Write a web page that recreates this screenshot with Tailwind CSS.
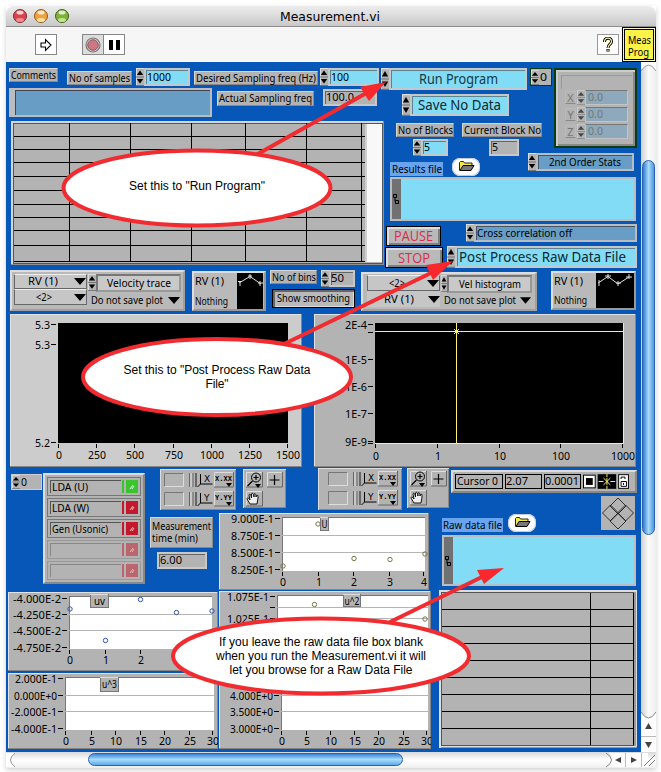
<!DOCTYPE html>
<html lang="en">
<head>
<meta charset="utf-8">
<title>Measurement.vi</title>
<script src="https://cdn.jsdelivr.net/npm/@tailwindcss/browser@4"></script>
</head>
<body class="bg-white w-[661px] h-[772px] overflow-hidden text-black font-['Noto_Sans','DejaVu_Sans',sans-serif] text-[11px] leading-none">

<svg class="hidden">
  <symbol id="st" viewBox="0 0 8 18" preserveAspectRatio="none"><rect width="8" height="18" fill="#b3b3b3"/><path d="M0 .5H8M.5 0V18" stroke="#ddd"/><path d="M0 17.5H8M0 9H8" stroke="#777"/><path d="M4 2.5 7.2 7H.8ZM4 15.5 7.2 11H.8Z"/></symbol>
  <symbol id="dn" viewBox="0 0 12 7"><path d="M0 0H12L6 7Z"/></symbol>
  <symbol id="folder" viewBox="0 0 28 18"><rect width="28" height="18" rx="8" fill="#fff"/><rect x=".5" y=".5" width="27" height="17" rx="8" fill="none" stroke="#bfc8d4"/><path d="M7.500 12.500V4.500l1-1h3l1 1.500h7.500v3" fill="#f3e94a" stroke="#222"/><path d="M8 12.500l3-5H22l-3 5Z" fill="#777" stroke="#000"/></symbol>
  <symbol id="path" viewBox="0 0 8 12"><path d="M1.500 1.500h3v3h-3zM3.500 7.500h3v3h-3zM3 5v3.500" fill="none" stroke="#000"/></symbol>
  <symbol id="fmt" viewBox="0 0 76 41">
    <path d="M4.500 17.500V4.500h19M4.500 36.500V23.500h19" fill="none" stroke="#777"/><path d="M23.500 4.500v13h-19M23.500 23.500v13h-19" fill="none" stroke="#ddd"/>
    <path d="M29.500 4v14M29.500 23v14M33 4v14M33 23v14" stroke="#666"/><path d="M31 4v14M31 23v14" stroke="#ddd"/><path d="M36 4v14M36 23v14" stroke="#666" stroke-width="2"/>
    <path d="M40.500 5v10h12M40.500 15l-3 3M40.500 24v10h12M40.500 34l-3 3" fill="none" stroke="#000"/>
    <path d="M54.500 18V3.500H73M54.500 37V22.500H73" fill="none" stroke="#ddd"/><path d="M73.500 3v15H54M73.500 22v15H54" fill="none" stroke="#666"/>
    <path d="M66 14h6l-3 4ZM66 33h6l-3 4Z"/>
    <g font-family="DejaVu Sans" font-size="9"><text x="44" y="13">X</text><text x="44" y="32">Y</text></g>
    <g font-family="DejaVu Sans Mono" font-size="7" font-weight="bold"><text x="55" y="12" textLength="17">X.XX</text><text x="55" y="31" textLength="17">Y.YY</text></g>
  </symbol>
  <symbol id="tools" viewBox="0 0 43 40">
    <path d="M3.500 18V3.500H19M24.500 18V3.500H39M3.500 37V22.500H19" fill="none" stroke="#ddd"/><path d="M19.500 3v15H3M39.500 3v15H24M19.500 22v15H3" fill="none" stroke="#666"/>
    <circle cx="13" cy="8.500" r="4.500" fill="none" stroke="#000"/><path d="M13 6v5M10.500 8.500h5M9.500 12l-5 5M31.500 6v10M26.500 11h10" stroke="#000" stroke-width="1.200"/><path d="M12 15h6l-3 4Z"/>
    <path d="M7 35l-3-5c0-2 2-1 3 1l-1-5c1-2 2 0 2.500 3V25c1-2 2 0 2.500 3V25c1-1 2 0 2 3l1-2c1 0 1 1 1 3l-1 6Z" fill="#eee" stroke="#000" stroke-width=".9"/>
  </symbol>
</svg>

<div class="relative w-[661px] h-[772px] pl-[6px] pt-[6px]">
 <div class="w-[650px] flex flex-col shadow-[0_2px_5px_#00000030]">

  <header class="h-[21px] rounded-t-lg bg-linear-to-b from-[#ededed] to-[#c9c9c9] border-b border-[#8d8d8d] flex items-center relative">
    <div class="flex gap-[7px] ml-[7px]">
      <svg class="size-[14px]" viewBox="0 0 14 14"><circle cx="7" cy="7" r="6.500" fill="#d9454e" stroke="#7c2a2e"/><ellipse cx="7" cy="3.500" rx="3.500" ry="2" fill="#fff" opacity=".75"/><ellipse cx="7" cy="11" rx="4" ry="2" fill="#fbb" opacity=".6"/></svg>
      <svg class="size-[14px]" viewBox="0 0 14 14"><circle cx="7" cy="7" r="6.500" fill="#f0a13b" stroke="#8d5a22"/><ellipse cx="7" cy="3.500" rx="3.500" ry="2" fill="#fff" opacity=".75"/><ellipse cx="7" cy="11" rx="4" ry="2" fill="#ffc" opacity=".7"/></svg>
      <svg class="size-[14px]" viewBox="0 0 14 14"><circle cx="7" cy="7" r="6.500" fill="#7fb13b" stroke="#41601f"/><ellipse cx="7" cy="3.500" rx="3.500" ry="2" fill="#fff" opacity=".75"/><ellipse cx="7" cy="11" rx="4" ry="2" fill="#dfa" opacity=".7"/></svg>
    </div>
    <h1 class="ml-[211px] text-[13px] font-['DejaVu_Sans']" data-w="100">Measurement.vi</h1>
  </header>

  <nav class="h-[35px] bg-[#f6f6f6] flex items-start">
    <div class="ml-[29px] mt-[7px] w-[22px] h-[21px] border border-[#888] bg-white flex items-center justify-center"><svg class="w-3 h-[14px]" viewBox="0 0 12 14"><path d="M1 5h4.500V1.500L11 7 5.500 12.500V9H1Z" fill="#fff" stroke="#000" stroke-width="1.100"/></svg></div>
    <div class="ml-[25px] mt-[7px] w-[22px] h-[21px] border border-[#888] bg-[#ddd] flex items-center justify-center"><svg class="size-4" viewBox="0 0 16 16"><circle cx="8" cy="8" r="7" fill="#ddd" stroke="#777" stroke-width="1.200"/><circle cx="8" cy="8" r="5.300" fill="#cf7780" stroke="#8c5a60"/></svg></div>
    <div class="mt-[7px] w-[21px] h-[21px] border border-l-0 border-[#888] bg-white flex items-center justify-center gap-[3px]"><i class="w-1 h-[10px] bg-black"></i><i class="w-1 h-[10px] bg-black"></i></div>
    <div class="ml-[472px] mt-[7px] w-[22px] h-[21px] border border-[#999] bg-white flex items-center justify-center"><svg class="w-3 h-4" viewBox="0 0 12 16"><path d="M2.500 5C2.500 0 9.500 0 9.500 4.500 9.500 7.500 6 7 6 11M6 12v2.500" fill="none" stroke="#000" stroke-width="3"/><path d="M2.500 5C2.500 0 9.500 0 9.500 4.500 9.500 7.500 6 7 6 11M6 12.500v1.500" fill="none" stroke="#fbf6a0" stroke-width="1.200"/></svg></div>
    <div class="ml-[3px] w-[34px] h-[35px] border border-black bg-[#f4f4d8] p-px"><div class="w-full h-full border border-black bg-[#fdf247] pt-[4px] pl-[3px] text-[10.500px] leading-[12px]"><div data-w="23">Meas</div><div data-w="21">Prog</div></div></div>
  </nav>

  <div class="flex">
  <main class="w-[635px] h-[690px] bg-[#0657b8] flex flex-col">

   <!-- acquisition settings -->
   <section class="flex h-[206px]">
    <div class="w-[375px] shrink-0">
      <div class="flex items-start h-[26px]">
        <div class="ml-[3px] mt-[6px] w-[49px] h-[14px] bg-[#b3b3b3] border border-t-[#d5d5d5] border-l-[#d5d5d5] border-[#888] flex items-center justify-center"><span data-w="45">Comments</span></div>
        <div class="ml-[9px] mt-[9px] w-[65px] h-[14px] bg-[#b3b3b3] border border-t-[#d5d5d5] border-l-[#d5d5d5] border-[#888] flex items-center justify-center"><span data-w="61">No of samples</span></div>
        <svg class="ml-[4px] mt-[6px] w-2 h-[18px]"><use href="#st"/></svg>
        <div class="mt-[6px] w-[46px] h-[18px] bg-[#83dcf5] border-2 border-[#c3c8ca] shadow-[inset_1px_1px_#5d8390] pl-px flex items-center"><span data-w="24">1000</span></div>
        <div class="ml-[4px] mt-[9px] w-[124px] h-[14px] bg-[#b3b3b3] border border-t-[#d5d5d5] border-l-[#d5d5d5] border-[#888] flex items-center justify-center"><span data-w="120">Desired Sampling freq (Hz)</span></div>
        <svg class="ml-[2px] mt-[6px] w-2 h-[18px]"><use href="#st"/></svg>
        <div class="mt-[6px] w-[51px] h-[18px] bg-[#83dcf5] border-2 border-[#c3c8ca] shadow-[inset_1px_1px_#5d8390] pl-px flex items-center"><span data-w="18">100</span></div>
      </div>
      <div class="flex items-start h-[33px]">
        <div class="ml-[3px] w-[203px] h-[29px] bg-[#689dc6] border-2 border-l-[6px] border-[#b9bcc0] shadow-[inset_1px_1px_#445]"></div>
        <div class="ml-[5px] mt-[3px] w-[97px] h-[15px] bg-[#b3b3b3] border border-t-[#d5d5d5] border-l-[#d5d5d5] border-[#888] flex items-center justify-center"><span data-w="93">Actual Sampling freq</span></div>
        <div class="ml-[9px] mt-px w-[54px] h-[17px] bg-[#b3b3b3] border-2 border-[#c8c8c8] shadow-[inset_1px_1px_#666] pl-px flex items-center"><span data-w="28">100.0</span></div>
      </div>
      <svg class="ml-[5px] w-[373px] h-[144px]" viewBox="11 121 373 144">
        <rect x="11" y="121" width="373" height="144" fill="#8e9091"/><path d="M11 122H383M12 121V264" stroke="#d6d6d6" stroke-width="2"/><rect x="13.500" y="123.500" width="369" height="140" fill="#b3b3b3" stroke="#555"/>
        <path d="M69.500 123V262M130.500 123V262M191.500 123V262M245.500 123V262M306.500 123V262M361.500 123V262M14 136.500H365M14 149.500H365M14 162.500H365M14 176.500H365M14 190.500H365M14 204.500H365M14 217.500H365M14 230.500H365M14 245.500H365M14 261.500H365" stroke="#000"/>
        <rect x="365" y="124" width="17" height="138" fill="#f8f8f8"/><path d="M366 124V262" stroke="#d0d0d0" stroke-width="2"/>
      </svg>
    </div>

    <div class="w-[260px] shrink-0">
      <div class="flex items-start h-[91px]">
        <div class="w-[173px] shrink-0">
          <div class="flex items-start h-[32px] pt-[6px]">
            <svg class="w-2 h-[22px] shrink-0"><use href="#st"/></svg>
            <div class="w-[138px] h-[22px] bg-[#83dcf5] border-2 border-[#c3c8ca] shadow-[inset_1px_1px_#5d8390] flex items-center justify-center text-[14px] text-[#123a46]"><span data-w="79">Run Program</span></div>
            <div class="ml-[3px] w-[22px] h-[18px] border border-[#0a3c14] bg-[#b3b3b3] flex items-center"><svg class="w-2 h-[15px]"><use href="#st"/></svg><span class="ml-px" data-w="7">0</span></div>
          </div>
          <div class="flex h-[27px]">
            <svg class="ml-[21px] w-2 h-[22px] shrink-0"><use href="#st"/></svg>
            <div class="w-[99px] h-[22px] bg-[#83dcf5] border-2 border-[#c3c8ca] shadow-[inset_1px_1px_#5d8390] flex items-center justify-center text-[14px] text-[#0c2830]"><span data-w="83">Save No Data</span></div>
          </div>
          <div class="flex pt-[2px] h-[18px]">
            <div class="ml-[15px] w-[58px] h-[14px] bg-[#b3b3b3] border border-t-[#d5d5d5] border-l-[#d5d5d5] border-[#888] flex items-center justify-center"><span data-w="55">No of Blocks</span></div>
            <div class="ml-[8px] w-[80px] h-[14px] bg-[#b3b3b3] border border-t-[#d5d5d5] border-l-[#d5d5d5] border-[#888] flex items-center justify-center"><span data-w="77">Current Block No</span></div>
          </div>
          <div class="flex">
            <svg class="ml-[32px] w-2 h-[17px]"><use href="#st"/></svg>
            <div class="w-[27px] h-[17px] bg-[#83dcf5] border-2 border-[#c3c8ca] shadow-[inset_1px_1px_#5d8390] pl-px flex items-center"><span data-w="6">5</span></div>
            <div class="ml-[41px] w-[30px] h-[17px] bg-[#b3b3b3] border-2 border-[#c8c8c8] shadow-[inset_1px_1px_#666] pl-px flex items-center"><span data-w="6">5</span></div>
          </div>
        </div>
        <div class="mt-[6px] w-[83px] h-[80px] border-2 border-[#0a3c14] bg-[#b3b3b3] p-[3px] shadow-[inset_2px_2px_#ccc,inset_-2px_-2px_#8a8a8a]">
          <div class="mt-[2px] ml-[2px] h-[14px] border-l border-t border-[#999]"></div>
          <div class="flex flex-col gap-[2px] ml-[6px] text-[#777] mt-[1px]">
            <div class="flex items-center h-[15px]"><span class="w-[11px] border border-[#bbb] border-b-[#888] text-center">X</span><svg class="ml-px w-2 h-[15px] opacity-60"><use href="#st"/></svg><div class="w-[43px] h-[15px] border border-[#c3c3c3] border-t-[#777] bg-[#8da9bb] pl-[2px] flex items-center"><span data-w="15">0.0</span></div></div>
            <div class="flex items-center h-[15px]"><span class="w-[11px] border border-[#bbb] border-b-[#888] text-center">Y</span><svg class="ml-px w-2 h-[15px] opacity-60"><use href="#st"/></svg><div class="w-[43px] h-[15px] border border-[#c3c3c3] border-t-[#777] bg-[#8da9bb] pl-[2px] flex items-center"><span data-w="15">0.0</span></div></div>
            <div class="flex items-center h-[15px]"><span class="w-[11px] border border-[#bbb] border-b-[#888] text-center">Z</span><svg class="ml-px w-2 h-[15px] opacity-60"><use href="#st"/></svg><div class="w-[43px] h-[15px] border border-[#c3c3c3] border-t-[#777] bg-[#8da9bb] pl-[2px] flex items-center"><span data-w="15">0.0</span></div></div>
          </div>
        </div>
      </div>
      <div class="flex items-start h-[24px]">
        <div class="ml-[9px] mt-[9px] w-[53px] h-[14px] bg-[#68a5ee] flex items-center justify-center"><span data-w="50">Results file</span></div>
        <svg class="ml-[9px] mt-[5px] w-7 h-[18px]"><use href="#folder"/></svg>
        <svg class="ml-[48px] w-2 h-[18px]"><use href="#st"/></svg>
        <div class="w-[98px] h-[18px] bg-[#689dc6] border-2 border-[#b9bcc0] shadow-[inset_1px_1px_#456] flex items-center justify-center"><span data-w="72">2nd Order Stats</span></div>
      </div>
      <div class="ml-[9px] w-[246px] h-[44px] bg-[#83dcf5] border-2 border-[#b9bcc0] flex"><div class="w-[9px] bg-[#6f7173] flex items-center"><svg class="w-2 h-3"><use href="#path"/></svg></div></div>
      <div class="flex mt-[3px]">
        <div class="ml-[4px] w-[58px] flex flex-col items-start text-[14px] text-[#d82c48] font-['Open_Sans'] font-medium">
          <div class="mt-[2px] ml-px w-[55px] h-[20px] bg-[#b9b9b9] border border-black shadow-[inset_2px_2px_#ddd,inset_-2px_-2px_#808080] flex items-center justify-center"><span data-w="39">PAUSE</span></div>
          <div class="mt-px w-[58px] h-[21px] bg-[#b9b9b9] border border-black shadow-[inset_2px_2px_#ddd,inset_-2px_-2px_#808080] flex items-center justify-center"><span data-w="32">STOP</span></div>
        </div>
        <div class="ml-[4px] w-[190px]">
          <div class="flex h-[22px]"><svg class="ml-[19px] w-2 h-[18px] shrink-0"><use href="#st"/></svg><div class="w-[164px] h-[18px] bg-[#689dc6] border-2 border-[#b9bcc0] shadow-[inset_1px_1px_#456] pl-px flex items-center"><span data-w="95">Cross correlation off</span></div></div>
          <div class="flex"><svg class="w-2 h-[22px] shrink-0"><use href="#st"/></svg><div class="w-[182px] h-[22px] bg-[#83dcf5] border-2 border-[#c3c8ca] shadow-[inset_1px_1px_#5d8390] pl-[2px] flex items-center text-[14px] text-[#0c2830]"><span data-w="167">Post Process Raw Data File</span></div></div>
        </div>
      </div>
    </div>
   </section>

   <!-- plot selectors -->
   <section class="flex items-start h-[46px] pt-[2px]">
     <div class="ml-[4px] w-[175px] h-[41px] bg-[#b9b9b9] border-2 border-t-[#ddd] border-l-[#ddd] border-[#a0a0a0] flex pt-[2px] pl-[2px]">
       <div class="w-[73px]">
         <div class="h-[15px] border border-[#666] border-t-[#eee] flex items-center justify-end gap-[16px] bg-[#c6c6c6]"><span data-w="30">RV (1)</span><svg class="w-3 h-[7px]"><use href="#dn"/></svg></div>
         <div class="h-[16px] border border-[#666] border-t-[#eee] flex items-center justify-end gap-[22px] bg-[#c6c6c6]"><span data-w="16">&lt;2&gt;</span><svg class="w-3 h-[7px]"><use href="#dn"/></svg></div>
       </div>
       <div class="ml-px">
         <div class="flex"><svg class="w-2 h-[17px]"><use href="#st"/></svg><div class="w-[85px] h-[18px] border-2 border-[#999] border-t-[#777] border-l-[#777] bg-[#c9c9c9] flex items-center justify-center"><span data-w="64">Velocity trace</span></div></div>
         <div class="flex items-center h-[16px] gap-[5px] pl-[3px]"><span data-w="72">Do not save plot</span><svg class="w-3 h-[7px]"><use href="#dn"/></svg></div>
       </div>
     </div>
     <div class="ml-[7px] mt-px w-[74px] h-[40px] bg-[#b9b9b9] border-2 border-t-[#ddd] border-l-[#ddd] border-[#999] flex">
       <div class="w-[43px] pl-px flex flex-col justify-between py-[2px]"><span data-w="29">RV (1)</span><span data-w="33">Nothing</span></div>
       <svg class="w-[26px] h-[36px]" viewBox="0 0 26 36"><rect width="26" height="36"/><path d="M2 10 13 3.500 24 11M1 8.500h4M3 8v5M11 3h4M13 1v5M21 10h5M23 8v5" fill="none" stroke="#ddd"/></svg>
     </div>
     <div class="ml-[4px] w-[87px]">
       <div class="flex items-start"><div class="w-[47px] h-[14px] bg-[#b3b3b3] border border-t-[#d5d5d5] border-l-[#d5d5d5] border-[#888] flex items-center justify-center"><span data-w="44">No of bins</span></div><svg class="ml-[4px] w-2 h-[17px]"><use href="#st"/></svg><div class="w-[26px] h-[17px] bg-[#b3b3b3] border-2 border-[#c8c8c8] shadow-[inset_1px_1px_#666] flex items-center"><span data-w="13">50</span></div></div>
       <div class="mt-[2px] ml-[2px] w-[83px] h-[19px] bg-[#b9b9b9] border border-black shadow-[inset_2px_2px_#666,inset_-1px_-1px_#ddd] flex items-center justify-center"><span data-w="73">Show smoothing</span></div>
     </div>
     <div class="ml-[4px] mt-[2px] w-[176px] h-[39px] bg-[#b9b9b9] border-2 border-t-[#ddd] border-l-[#ddd] border-[#a0a0a0] flex pt-px pl-[4px]">
       <div class="w-[73px]">
         <div class="h-[16px] border border-[#666] border-t-[#eee] flex items-center justify-end gap-[22px] bg-[#c6c6c6]"><span data-w="16">&lt;2&gt;</span><svg class="w-3 h-[7px]"><use href="#dn"/></svg></div>
         <div class="h-[16px] flex items-center justify-end gap-[14px] bg-[#c6c6c6]"><span data-w="30">RV (1)</span><svg class="w-3 h-[7px]"><use href="#dn"/></svg></div>
       </div>
       <div class="ml-px">
         <div class="flex"><svg class="w-[6px] h-[17px]"><use href="#st"/></svg><div class="w-[85px] h-[18px] border-2 border-[#999] border-t-[#777] border-l-[#777] bg-[#c9c9c9] flex items-center justify-center"><span data-w="62">Vel histogram</span></div></div>
         <div class="flex items-center h-[15px] gap-[4px] pl-[3px]"><span data-w="72">Do not save plot</span><svg class="w-[11px] h-[7px]"><use href="#dn"/></svg></div>
       </div>
     </div>
     <div class="ml-[14px] mt-px w-[85px] h-[39px] bg-[#b9b9b9] border-2 border-t-[#ddd] border-l-[#ddd] border-[#999] flex">
       <div class="w-[43px] pl-px flex flex-col justify-between py-[2px]"><span data-w="29">RV (1)</span><span data-w="33">Nothing</span></div>
       <svg class="w-[38px] h-[35px]" viewBox="0 0 38 35"><rect width="38" height="35"/><path d="M2 10 12 3.500 22 11 33 4M3 7v6M9 3h6M12 1v5M20 10h5M22 8v5M30 4h6M33 1v5" fill="none" stroke="#ddd"/></svg>
     </div>
   </section>

   <!-- main graphs -->
   <section class="flex gap-[12px] pl-[4px] h-[154px] items-start">
     <svg id="g1" class="w-[292px] h-[153px]" viewBox="10 314 292 153"></svg>
     <svg id="g2" class="w-[322px] h-[153px]" viewBox="314 314 322 153"></svg>
   </section>

   <!-- channels, palettes, cursor -->
   <section class="flex h-[122px] items-start">
     <div class="w-[142px] flex items-start shrink-0">
       <div class="ml-[5px] mt-[6px] w-[31px] h-[16px] bg-[#b3b3b3] border border-[#ccc] flex items-center"><svg class="w-2 h-[14px]"><use href="#st"/></svg><span class="ml-px" data-w="6">0</span></div>
       <div class="ml-px mt-[5px] w-[102px] h-[111px] shrink-0 bg-[#b3b3b3] border-2 border-t-[#ddd] border-l-[#ddd] border-[#888] p-[2px] flex flex-col gap-[2px]">
         <div class="h-[19px] border border-[#777] p-[2px] flex"><span class="w-[73px] border-l border-t border-[#555] pl-px"><span data-w="36">LDA (U)</span></span><i class="w-[2px] h-full ml-[1px] bg-[#3cc42e]"></i><i class="ml-[2px] w-[12px] h-full bg-[#3cc42e] flex items-center justify-center"><svg class="size-[6px]" viewBox="0 0 6 6"><path d="M1 5 4 1M3 5 5 2" stroke="#dfe" /></svg></i></div>
         <div class="h-[19px] border border-[#777] p-[2px] flex"><span class="w-[73px] border-l border-t border-[#555] pl-px"><span data-w="37">LDA (W)</span></span><i class="w-[2px] h-full ml-[1px] bg-[#c4182c]"></i><i class="ml-[2px] w-[12px] h-full bg-[#c4182c] flex items-center justify-center"><svg class="size-[6px]" viewBox="0 0 6 6"><path d="M1 5 4 1M3 5 5 2" stroke="#fcc" /></svg></i></div>
         <div class="h-[19px] border border-[#777] p-[2px] flex"><span class="w-[73px] border-l border-t border-[#555] pl-px"><span data-w="56">Gen (Usonic)</span></span><i class="w-[2px] h-full ml-[1px] bg-[#c4182c]"></i><i class="ml-[2px] w-[12px] h-full bg-[#c4182c] flex items-center justify-center"><svg class="size-[6px]" viewBox="0 0 6 6"><path d="M1 5 4 1M3 5 5 2" stroke="#fcc" /></svg></i></div>
         <div class="h-[19px] border border-[#999] p-[2px] flex"><span class="w-[73px] border-l border-t border-[#888]"></span><i class="w-[2px] h-full ml-[1px] bg-[#bb666f]"></i><i class="ml-[2px] w-[12px] h-full bg-[#bb666f] flex items-center justify-center"><svg class="size-[6px]" viewBox="0 0 6 6"><path d="M1 5 4 1M3 5 5 2" stroke="#dbb" /></svg></i></div>
         <div class="h-[19px] border border-[#999] p-[2px] flex"><span class="w-[73px] border-l border-t border-[#888]"></span><i class="w-[2px] h-full ml-[1px] bg-[#bb666f]"></i><i class="ml-[2px] w-[12px] h-full bg-[#bb666f] flex items-center justify-center"><svg class="size-[6px]" viewBox="0 0 6 6"><path d="M1 5 4 1M3 5 5 2" stroke="#dbb" /></svg></i></div>
       </div>
     </div>
     <div class="w-[301px] shrink-0">
       <div class="flex items-start h-[45px]">
         <svg class="ml-[12px] mt-px w-[76px] h-[41px] shrink-0 bg-[#b3b3b3] shadow-[inset_1px_1px_#ddd,inset_-1px_-1px_#888]"><use href="#fmt"/></svg>
         <svg class="ml-[7px] mt-px w-[43px] h-[39px] shrink-0 bg-[#b3b3b3] shadow-[inset_1px_1px_#ddd,inset_-1px_-1px_#888]" viewBox="0 0 43 39"><use href="#tools" width="43" height="40"/></svg>
         <div class="ml-[32px] w-[84px] h-[42px] shrink-0 bg-[#b3b3b3] shadow-[inset_1px_1px_#ddd,inset_-1px_-1px_#888] flex justify-end pr-[2px]"><svg class="w-[80px] h-[41px]" viewBox="-4 0 80 41"><use href="#fmt" width="76" height="41"/></svg></div>
         <svg class="ml-[5px] w-[42px] h-[40px] shrink-0 bg-[#b3b3b3] shadow-[inset_1px_1px_#ddd,inset_-1px_-1px_#888]" viewBox="0 0 42 40"><use href="#tools" width="43" height="40"/></svg>
       </div>
       <div class="flex items-start">
         <div class="ml-[2px] w-[63px] shrink-0 flex flex-col items-center">
           <div class="mt-[4px] w-[63px] h-[31px] bg-[#b3b3b3] border border-t-[#d5d5d5] border-l-[#d5d5d5] border-[#888] pl-px pt-[2px] leading-[12px]"><div data-w="59">Measurement</div><div data-w="46">time (min)</div></div>
           <div class="mt-[4px] w-[50px] h-[17px] bg-[#b3b3b3] border-2 border-[#c8c8c8] shadow-[inset_1px_1px_#666] pl-px flex items-center"><span data-w="22">6.00</span></div>
         </div>
         <svg id="c1" class="ml-[6px] w-[210px] h-[77px] shrink-0" viewBox="219 513 210 77"></svg>
       </div>
     </div>
     <div class="w-[192px] shrink-0">
       <div class="ml-[2px] mt-[2px] w-[186px] h-[23px] bg-[#b3b3b3] border-2 border-t-[#ddd] border-l-[#ddd] border-[#888] flex items-center gap-[2px] pl-[2px]">
         <div class="w-[49px] h-[15px] border border-black flex items-center pl-px"><span data-w="41">Cursor 0</span></div>
         <div class="w-[38px] h-[15px] border border-black flex items-center"><span data-w="22">2.07</span></div>
         <div class="w-[38px] h-[15px] border border-black flex items-center"><span data-w="34">0.0001</span></div>
         <svg class="w-[53px] h-[15px]" viewBox="0 0 53 15"><rect x=".5" y="1" width="12" height="13" fill="#fff" stroke="#000"/><rect x="3" y="4" width="7" height="7"/><rect x="15" width="19" height="15"/><path d="M16 7.500h5M28 7.500h5M24.500 0v3M24.500 12v3M21 4l7 7M28 4l-7 7M24.500 4v7" stroke="#fdf56a"/><rect x="36.500" y=".5" width="10" height="14" fill="#fff" stroke="#000"/><path d="M39 7.500h5.500v5H39zM39 5V3h4v2M41.500 9v2" fill="none" stroke="#000"/></svg>
       </div>
       <div class="flex items-start">
         <div class="mt-[25px] -ml-[7px] w-[61px] h-[14px] bg-[#68a5ee] flex items-center justify-center"><span data-w="59">Raw data file</span></div>
         <svg class="ml-[5px] mt-[21px] w-7 h-[18px] shrink-0"><use href="#folder"/></svg>
         <svg class="ml-[65px] mt-[3px] w-[34px] h-[34px] bg-[#b3b3b3] shrink-0" viewBox="0 0 34 34"><path d="M17 2 25 10 17 18 9 10ZM17 17 25 25 17 33 9 25ZM9.500 9 17.500 17 9.500 25 1.500 17ZM24.500 9 32.500 17 24.500 25 16.500 17Z" fill="none" stroke="#222" stroke-width=".9"/></svg>
       </div>
       <div class="mt-[3px] -ml-[7px] w-[194px] h-[51px] bg-[#83dcf5] border-2 border-[#b9bcc0] flex"><div class="w-[9px] bg-[#6f7173] flex items-center"><svg class="w-2 h-3"><use href="#path"/></svg></div></div>
     </div>
   </section>

   <!-- statistics charts -->
   <section class="flex items-start pl-[2px]">
     <div class="w-[211px] pt-[2px] flex flex-col gap-[2px] shrink-0"><svg id="c2" class="w-[210px] h-[79px]" viewBox="8 592 210 79"></svg><svg id="c3" class="w-[210px] h-[76px]" viewBox="8 673 210 76"></svg></div>
     <div class="w-[212px] pt-px flex flex-col gap-[2px] shrink-0"><svg id="c4" class="w-[212px] h-[80px]" viewBox="219 591 212 80"></svg><svg id="c5" class="w-[212px] h-[76px]" viewBox="219 673 212 76"></svg></div>
     <svg class="ml-[8px] w-[198px] h-[158px] shrink-0" viewBox="439 590 198 158"><rect x="439" y="590" width="198" height="158" fill="#999"/><path d="M440 590V748M439 591H637" stroke="#ddd" stroke-width="2"/><rect x="441.500" y="592.500" width="192" height="153" fill="#b3b3b3" stroke="#555"/><path d="M442 609.500H633M442 626.500H633M442 643.500H633M442 660.500H633M442 677.500H633M442 694.500H633M442 711.500H633M442 728.500H633M590.500 593V745M633.500 593V745" stroke="#000"/><path d="M440 746.500H636.500V591" fill="none" stroke="#ddd"/></svg>
   </section>
  </main>

  <!-- vertical scrollbar -->
  <aside class="w-[15px] h-[690px] bg-linear-to-r from-[#d0d0d0] via-[#fbfbfb] to-[#eee] flex flex-col">
    <svg class="w-[15px] h-[98px]" viewBox="0 0 15 98"><path d="M0 0H15V8Q7.500-1 0 8Z" fill="#fff"/><path d="M0 9Q7.500-3 15 9" fill="none" stroke="#999"/></svg>
    <div class="w-[13px] mx-px h-[375px] rounded-full border border-[#2b62b0] bg-linear-to-r from-[#2e78cb] via-[#a9dcfb] to-[#4b98e0]"></div>
    <svg class="mt-auto w-[15px] h-[44px]" viewBox="0 0 15 44"><path d="M0 4Q7.500 16 15 4V44H0Z" fill="#fff"/><path d="M0 4Q7.500 16 15 4" fill="none" stroke="#888"/><path d="M0 28.500H15" stroke="#bbb"/><path d="M4 21H11L7.500 15ZM4 34H11L7.500 40Z" fill="#444"/></svg>
  </aside>
  </div>

  <!-- horizontal scrollbar -->
  <footer class="h-[16px] flex bg-linear-to-b from-[#d8d8d8] via-[#fff] to-[#eee]">
    <svg class="w-[82px] h-[16px]" viewBox="0 0 82 16"><path d="M0 1H9Q-1 8 9 15H0Z" fill="#fff"/><path d="M9 1Q0 8 9 15" fill="none" stroke="#999"/></svg>
    <div class="w-[315px] h-[13px] mt-px rounded-full border border-[#2b62b0] bg-linear-to-b from-[#3a84d6] via-[#a9dcfb] to-[#5cabec]"></div>
    <svg class="ml-auto w-[50px] h-[16px]" viewBox="0 0 50 16"><path d="M11 1Q19 8 11 15H50V1Z" fill="#fff"/><path d="M8 1Q19 8 8 15" fill="none" stroke="#888"/></svg>
    <svg class="w-[46px] h-[16px] -ml-[38px]" viewBox="0 0 46 16"><path d="M15.500 1V15M31.500 1V15" stroke="#bbb"/><path d="M5 8 11 5V11ZM27 8 21 5V11Z" fill="#444"/><path d="M34 14 45 3M39 14 45 8" stroke="#777"/></svg>
  </footer>
 </div>

 <!-- callouts drawn over the window -->
 <svg class="absolute inset-0 w-[661px] h-[772px]" viewBox="0 0 661 772" font-family="Liberation Sans" font-size="12" text-anchor="middle">
   <g stroke="#f02c30" stroke-width="4" fill="#fff">
     <path d="M256 155 370 91M284 344 433 272M390 622 484 576"/>
     <ellipse cx="197" cy="188" rx="133.500" ry="37.500"/>
     <ellipse cx="217" cy="377" rx="134" ry="38"/>
     <ellipse cx="321" cy="656" rx="148" ry="37.500"/>
   </g>
   <path d="M386 82 360 87 369 101ZM453 261 426 265 433 280ZM504 568 477 570 484 584Z" fill="#f8282c"/>
   <text x="197" y="190" textLength="136">Set this to "Run Program"</text>
   <text x="217" y="374" textLength="187">Set this to "Post Process Raw Data</text>
   <text x="217" y="388" textLength="23">File"</text>
   <text x="321" y="646" textLength="204">If you leave the raw data file box blank</text>
   <text x="321" y="660" textLength="210">when you run the Measurement.vi it will</text>
   <text x="321" y="674" textLength="183">let you browse for a Raw Data File</text>
 </svg>
</div>

<script>
document.querySelectorAll('[data-w]').forEach(function (e) {
  var w = e.dataset.w, s = e.innerHTML;
  e.innerHTML = '<svg width="' + w + '" height="1.1em" overflow="visible" fill="currentColor" style="display:block;height:1.1em"><text x="0" y=".92em" textLength="' + w + '" lengthAdjust="spacingAndGlyphs">' + s + '</text></svg>';
});

function label(s, x, y, w, anchor) {
  return '<text x="' + x + '" y="' + y + '" textLength="' + w + '" lengthAdjust="spacingAndGlyphs" text-anchor="' + anchor + '">' + s + '</text>';
}
// b: frame box, p: plot box, y: [label, y], x: [label, x]
function chart(id, o) {
  var b = o.b, p = o.p, h = '';
  h += '<rect x="' + b[0] + '" y="' + b[1] + '" width="' + b[2] + '" height="' + b[3] + '" fill="' + o.bg + '"/>';
  h += '<path d="M' + b[0] + ' ' + (b[1] + .5) + 'h' + b[2] + 'M' + (b[0] + .5) + ' ' + b[1] + 'v' + b[3] + '" stroke="#e2e2e2"/>';
  h += '<path d="M' + b[0] + ' ' + (b[1] + b[3] - .5) + 'h' + b[2] + 'M' + (b[0] + b[2] - .5) + ' ' + b[1] + 'v' + b[3] + '" stroke="#858585"/>';
  h += '<rect x="' + p[0] + '" y="' + p[1] + '" width="' + p[2] + '" height="' + p[3] + '" fill="' + o.fill + '"/>';
  if (o.fill === '#fff') h += '<path d="M' + p[0] + ' ' + (p[1] + .5) + 'h' + p[2] + 'M' + (p[0] + .5) + ' ' + p[1] + 'v' + p[3] + '" stroke="#777"/>';
  (o.grid || []).forEach(function (g) { h += '<path d="M' + p[0] + ' ' + (g + .5) + 'h' + p[2] + '" stroke="#b5b5b5"/>'; });
  h += '<g font-family="Noto Sans" font-size="10.5">';
  o.y.forEach(function (t) {
    h += '<path d="M' + (p[0] - 7) + ' ' + (t[1] + .5) + 'h5" stroke="#000"/>';
    if (t[0]) h += label(t[0], p[0] - 8, t[1] + 4.5, t[2] || o.yw, 'end');
  });
  o.x.forEach(function (t) {
    h += '<path d="M' + (t[1] + .5) + ' ' + (p[1] + p[3] + 1) + 'v4" stroke="#000"/>';
    if (t[0]) h += label(t[0], t[1] + 1, p[1] + p[3] + o.xo, t[0].length * 6, 'middle');
  });
  (o.pts || []).forEach(function (c) { h += '<circle cx="' + c[0] + '" cy="' + c[1] + '" r="2.2" fill="none" stroke="' + o.col + '"/>'; });
  if (o.tag) {
    var t = o.tag;
    h += '<rect x="' + (t[1] + .5) + '" y="' + (t[2] + .5) + '" width="' + t[3] + '" height="' + t[4] + '" fill="#b3b3b3" stroke="#777"/>';
    h += '<path d="M' + t[1] + ' ' + (t[2] + .5) + 'h' + t[3] + '" stroke="#ddd"/>' + label(t[0], t[1] + t[3] / 2 + .5, t[2] + 10.5, t[5], 'middle');
  }
  h += '</g>' + (o.extra || '');
  document.getElementById(id).innerHTML = h;
}
chart('g1', {b: [10, 314, 292, 153], p: [58, 323, 230, 120], bg: '#cccccc', fill: '#000', yw: 15, xo: 16,
  y: [['5.3', 324], ['5.3', 344], ['5.2', 442]],
  x: [['0', 58], ['250', 96], ['500', 134], ['750', 173], ['1000', 211], ['1250', 249], ['1500', 287]]});
chart('g2', {b: [314, 314, 322, 153], p: [375, 323, 248, 120], bg: '#b3b3b3', fill: '#000', yw: 22, xo: 17,
  y: [['2E-4', 324], ['', 332], ['1E-5', 359], ['1E-6', 386], ['1E-7', 413], ['9E-9', 441], ['', 443]],
  x: [['0', 375], ['1', 437], ['10', 499], ['100', 560], ['1000', 622]],
  extra: '<path d="M375 331.500H623M456.500 323V443" stroke="#fbf36c"/><path d="M454 329l5 5M459 329l-5 5" stroke="#fbf36c"/><path d="M375 443.500H623.500V323" fill="none" stroke="#e8e8e8"/>'});
chart('c1', {b: [219, 513, 210, 77], p: [282, 517, 143, 54], bg: '#b3b3b3', fill: '#fff', yw: 43, xo: 15, col: '#77774a', grid: [535, 552],
  y: [['9.000E-1', 518], ['8.750E-1', 535], ['8.500E-1', 552], ['8.250E-1', 569]],
  x: [['0', 282], ['1', 318], ['2', 353], ['3', 389], ['4', 423]],
  pts: [[283, 566], [318, 524], [354, 558.5], [390, 559.5], [425, 554]], tag: ['U', 320, 517, 8, 13, 6]});
chart('c2', {b: [8, 592, 210, 79], p: [69, 596, 143, 53], bg: '#b3b3b3', fill: '#fff', yw: 48, xo: 15, col: '#2c55b8', grid: [614, 630],
  y: [['-4.000E-2', 598], ['-4.250E-2', 614], ['-4.500E-2', 630], ['-4.750E-2', 647]],
  x: [['0', 69], ['1', 105], ['2', 140], ['', 176], ['', 211]],
  pts: [[70, 609], [140.500, 599.500], [105.500, 640.500], [176.500, 612.500], [212, 611]], tag: ['uv', 90, 594, 18, 13, 11]});
chart('c3', {b: [8, 673, 210, 76], p: [65, 677, 149, 53], bg: '#b3b3b3', fill: '#fff', yw: 42, xo: 15, grid: [695, 711],
  y: [['2.000E-1', 678], ['0.000E+0', 695, 43], ['-2.000E-1', 711, 46], ['-4.000E-1', 728, 46]],
  x: [['0', 65], ['5', 91], ['10', 115], ['15', 140], ['20', 164], ['25', 189], ['30', 212]], tag: ['u^3', 100, 677, 18, 14, 15]});
chart('c4', {b: [219, 591, 212, 80], p: [277, 595, 151, 54], bg: '#b3b3b3', fill: '#fff', yw: 42, xo: 15, col: '#77774a', grid: [607, 618],
  y: [['1.075E-1', 596], ['', 607], ['1.025E-1', 618]],
  x: [['', 277]], pts: [[314.500, 604.500], [425, 619]], tag: ['u^2', 343, 594, 17, 12, 15]});
chart('c5', {b: [219, 673, 212, 76], p: [281, 677, 147, 53], bg: '#b3b3b3', fill: '#fff', yw: 43, xo: 15, grid: [695, 711],
  y: [['', 678], ['4.000E+0', 695], ['3.500E+0', 711], ['3.000E+0', 728]],
  x: [['0', 281], ['5', 306], ['10', 330], ['15', 354], ['20', 378], ['25', 403], ['30', 426]]});
</script>
</body>
</html>
